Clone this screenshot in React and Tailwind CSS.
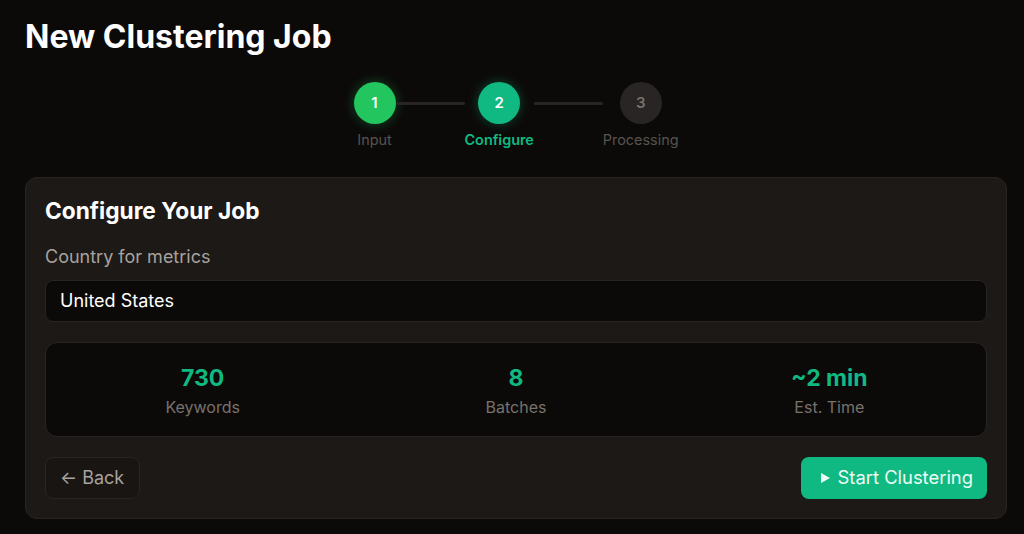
import React from "react";

function Stepper() {
    const steps = [
        { n: 1, label: "Input", state: "done" },
        { n: 2, label: "Configure", state: "active" },
        { n: 3, label: "Processing", state: "todo" },
    ];

    return (
        <div className="flex items-start justify-center">
            {steps.map((s, i) => (
                <React.Fragment key={s.n}>
                    <div className="flex flex-col items-center">
                        <div
                            className={`w-[42px] h-[42px] rounded-full flex items-center justify-center text-[15px] font-semibold ${
                                s.state === "done"
                                    ? "bg-[#22c55e] text-white shadow-[0_0_12px_rgba(34,197,94,0.35)]"
                                    : s.state === "active"
                                    ? "bg-[#10b981] text-white shadow-[0_0_12px_rgba(16,185,129,0.35)]"
                                    : "bg-[#292524] text-[#78716c]"
                            }`}
                        >
                            {s.n}
                        </div>
                        <div
                            className={`mt-[5px] text-[14.4px] ${
                                s.state === "active"
                                    ? "text-[#10b981] font-semibold"
                                    : "text-[#57534e]"
                            }`}
                        >
                            {s.label}
                        </div>
                    </div>
                    {i < steps.length - 1 && (
                        <div className="w-[69px] h-[3px] mt-[20px] bg-[#292524] rounded-full" />
                    )}
                </React.Fragment>
            ))}
        </div>
    );
}

export default function App() {
    const stats = [
        { value: "730", label: "Keywords" },
        { value: "8", label: "Batches" },
        { value: "~2 min", label: "Est. Time" },
    ];

    return (
        <div
            className="min-h-[534px] bg-[#0c0a09] pl-[25px] pr-[17px] pt-[18px] text-white"
            style={{ fontFamily: "Inter, 'Noto Sans', sans-serif" }}
        >
            <h1 className="text-[32px] leading-[38px] font-bold">
                New Clustering Job
            </h1>

            <div className="mt-[26px]">
                <Stepper />
            </div>

            {/* Config card */}
            <div className="mt-[26px] bg-[#1c1917] border border-[#292524] rounded-xl px-[19px] pt-[19px] pb-[19px]">
                <h2 className="text-[22.7px] leading-[28px] font-bold">
                    Configure Your Job
                </h2>
                <div className="mt-[20px] text-[#a8a29e] text-[18px] leading-[24px]">
                    Country for metrics
                </div>
                <div className="mt-[11px] h-[42px] bg-[#0c0a09] border border-[#292524] rounded-lg flex items-center px-[14px] text-[18px]">
                    United States
                </div>

                <div className="mt-[20px] h-[95px] pt-[3px] bg-[#0c0a09] border border-[#292524] rounded-xl grid grid-cols-3 items-center">
                    {stats.map((s) => (
                        <div key={s.label} className="flex flex-col items-center">
                            <div className="text-[23px] leading-[30px] font-bold text-[#10b981]">
                                {s.value}
                            </div>
                            <div className="mt-[2px] text-[16px] text-[#78716c]">
                                {s.label}
                            </div>
                        </div>
                    ))}
                </div>

                <div className="mt-[20px] flex items-center justify-between">
                    <button className="h-[42px] pl-[14px] pr-[15px] rounded-lg border border-[#292524] bg-[#181513] text-[#a8a29e] text-[18px] flex items-center gap-[5px]">
                        <span className="text-[18px]">←</span>
                        <span>Back</span>
                    </button>
                    <button className="h-[42px] pl-[19px] pr-[14px] rounded-lg bg-[#10b981] text-[#ecfdf5] text-[18.4px] flex items-center gap-[7px]">
                        <svg width="11" height="12" viewBox="0 0 11 12">
                            <path d="M1 1 L10 6 L1 11 Z" fill="currentColor" />
                        </svg>
                        <span>Start Clustering</span>
                    </button>
                </div>
            </div>
        </div>
    );
}
